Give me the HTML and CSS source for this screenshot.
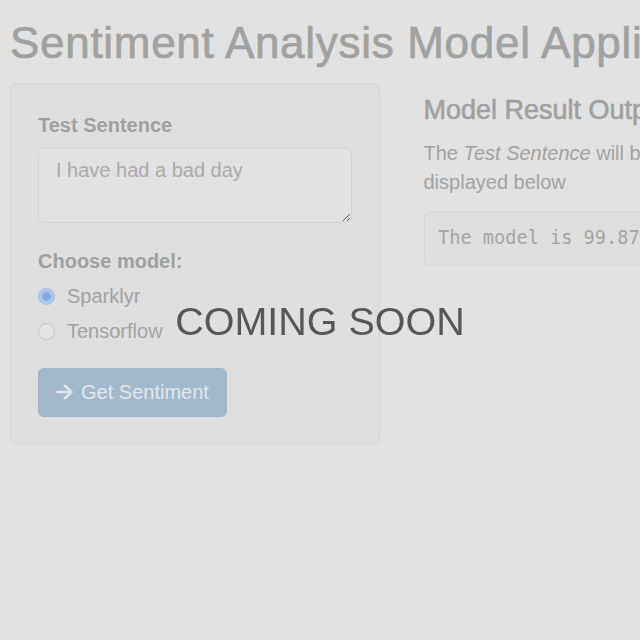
FILE: index.html
```html
<!DOCTYPE html>
<html lang="en">
<head>
<meta charset="utf-8">
<title>Sentiment Analysis Model Application</title>
<link rel="stylesheet" href="styles.css">
</head>
<body>
<div class="page">
  <h2 class="title">Sentiment Analysis Model Application</h2>
  <div class="row">
    <div class="well">
      <div class="form-group">
        <label class="control-label" for="sentence">Test Sentence</label>
        <textarea id="sentence" class="form-control">I have had a bad day</textarea>
      </div>
      <div class="form-group">
        <label class="control-label">Choose model:</label>
        <div class="options">
          <label class="radio"><span class="dot checked"></span><span>Sparklyr</span></label>
          <label class="radio"><span class="dot"></span><span>Tensorflow</span></label>
        </div>
      </div>
      <button class="btn" type="button">
        <svg class="arrow" width="18" height="16" viewBox="0 0 18 16" aria-hidden="true">
          <path d="M1.5 8H15.5M9 1.8L15.5 8L9 14.2" fill="none" stroke="currentColor" stroke-width="2.6" stroke-linecap="round" stroke-linejoin="round"/>
        </svg>
        <span>Get Sentiment</span>
      </button>
    </div>
    <div class="main">
      <h4 class="subtitle">Model Result Output</h4>
      <p class="desc">The <em>Test Sentence</em> will be analysed by the chosen model and the result will be<br>displayed below</p>
      <pre class="result">The model is 99.87% sure that this sentence is negative</pre>
    </div>
  </div>
</div>
<div class="coming">COMING SOON</div>
</body>
</html>
```
FILE: styles.css
```css
html, body {
  margin: 0;
  overflow: hidden;
  background: #e2e2e2;
}
body {
  font-family: "Liberation Sans", Arial, sans-serif;
  font-size: 20px;
  line-height: 28.6px;
  color: #a0a0a0;
}
.page {
  width: 1240px;
  padding-left: 10px;
}
.title {
  margin: 20px 0 17px;
  font-size: 44px;
  line-height: 46px;
  letter-spacing: 0.7px;
  font-weight: normal;
  -webkit-text-stroke: 0.7px #a1a1a1;
  color: #a1a1a1;
  white-space: nowrap;
}
.row {
  display: flex;
  align-items: flex-start;
  gap: 43.5px;
}
.well {
  width: 370px;
  flex: none;
  box-sizing: border-box;
  padding: 27px;
  background: #dfdfdf;
  border: 1px solid #d8d8d8;
  border-radius: 6px;
  box-shadow: inset 0 1px 1px rgba(0, 0, 0, 0.03);
}
.form-group {
  margin-bottom: 24px;
}
.form-group + .form-group {
  margin-bottom: 22px;
}
.control-label {
  display: block;
  margin-bottom: 7px;
  font-weight: bold;
  color: #a0a0a0;
}
.form-control {
  display: block;
  width: 100%;
  height: 76px;
  box-sizing: border-box;
  margin: 0;
  padding: 8px 17px;
  font-family: inherit;
  font-size: 20px;
  line-height: 28.6px;
  color: #ababab;
  background: #e2e2e2;
  border: 1px solid #d3d3d3;
  border-radius: 6px;
  box-shadow: inset 0 1px 1px rgba(0, 0, 0, 0.03);
  resize: vertical;
}
.options {
  display: flex;
  flex-direction: column;
  gap: 6.4px;
}
.radio {
  display: flex;
  align-items: center;
  gap: 12px;
  height: 28.6px;
  color: #a3a3a3;
}
.dot {
  width: 17px;
  height: 17px;
  box-sizing: border-box;
  border-radius: 50%;
  border: 1px solid #c4c4c4;
  background: #e4e4e4;
  flex: none;
}
.dot.checked {
  border-color: #a3bde4;
  background: radial-gradient(circle, #86a8dc 0 4px, #adc6ec 4.6px);
}
.btn {
  display: inline-flex;
  align-items: center;
  gap: 7px;
  height: 49px;
  box-sizing: border-box;
  padding: 0 17px;
  font-family: inherit;
  font-size: 20px;
  line-height: 28.6px;
  color: #e3e6e9;
  background: #a2b8cc;
  border: 1px solid #9fb4c7;
  border-radius: 6px;
}
.arrow {
  display: block;
  flex: none;
}
.main {
  width: 783px;
  flex: none;
}
.subtitle {
  margin: 13.4px 0 14px;
  font-size: 27px;
  line-height: 28.6px;
  font-weight: normal;
  -webkit-text-stroke: 0.6px #a0a0a0;
  color: #a0a0a0;
  white-space: nowrap;
}
.desc {
  margin: 0 0 14.4px;
  color: #a3a3a3;
  white-space: nowrap;
}
.result {
  margin: 0;
  padding: 13.6px;
  font-family: "DejaVu Sans Mono", "Liberation Mono", monospace;
  font-size: 18.6px;
  line-height: 26.6px;
  color: #a5a5a5;
  background: #dfdfdf;
  border: 1px solid #d6d6d6;
  border-radius: 6px;
}
.coming {
  position: fixed;
  inset: 0;
  display: flex;
  align-items: center;
  justify-content: center;
  padding-top: 3px;
  box-sizing: border-box;
  font-family: "Liberation Sans", Arial, sans-serif;
  font-size: 39.5px;
  color: #575757;
  pointer-events: none;
}
```
